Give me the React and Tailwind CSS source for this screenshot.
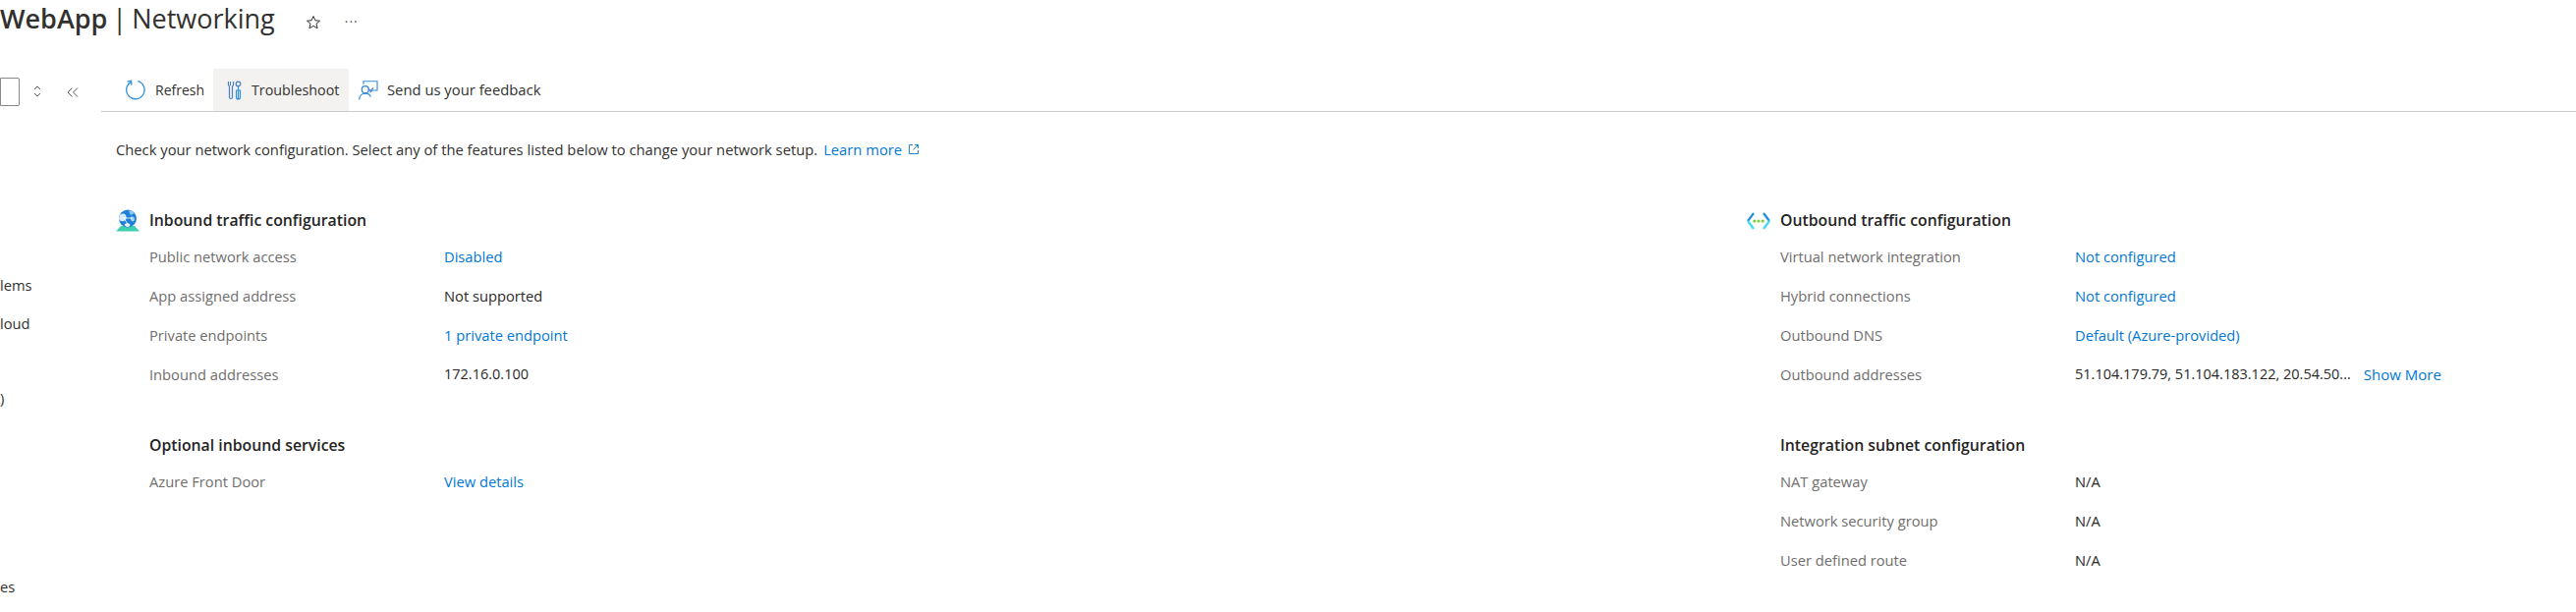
import React from "react";

const F = { fontFamily: '"Open Sans", "Noto Sans", sans-serif' };

function RefreshIcon() {
  return (
    <svg width="21" height="21" viewBox="0 0 21 21" fill="none" className="shrink-0">
      <path d="M6.2 2.6A9.2 9.2 0 1 0 13.4 1.7" stroke="#2f8fe0" strokeWidth="1.3" />
      <path d="M2.5 2.2 L6.6 1.2 L6.9 5.6" stroke="#2f8fe0" strokeWidth="1.3" />
    </svg>
  );
}

function ToolIcon() {
  return (
    <svg width="15" height="20" viewBox="0 0 15 20" fill="none" className="shrink-0">
      <path d="M1.5 1v3.5l1 1.5v11a1.5 1.5 0 0 0 3 0V6l1-1.5V1" stroke="#4a7fc1" strokeWidth="1.2" />
      <path d="M3.5 1v4" stroke="#4a7fc1" strokeWidth="1" />
      <circle cx="11.5" cy="3.4" r="2.3" stroke="#4a7fc1" strokeWidth="1.2" />
      <path d="M11.5 5.5v13M9.5 10h4v7a2 2 0 0 1-4 0z" stroke="#2f8fe0" strokeWidth="1.2" />
    </svg>
  );
}

function FeedbackIcon() {
  return (
    <svg width="20" height="20" viewBox="0 0 20 20" fill="none" className="shrink-0">
      <path d="M5 4V0.8H19V10H14L11.5 12.3" stroke="#2f8fe0" strokeWidth="1.1" />
      <path d="M10 8.5l2 2 3-3" stroke="#4a7fc1" strokeWidth="1.1" />
      <circle cx="6.8" cy="9.2" r="3.5" stroke="#2f7fd0" strokeWidth="1.2" />
      <path d="M0.7 19.5c0-4 2.6-6.4 6-6.4s5 1.2 5.6 3.5" stroke="#2f8fe0" strokeWidth="1.2" />
    </svg>
  );
}

function GlobeIcon() {
  return (
    <svg width="24" height="23" viewBox="0 0 24 23" fill="none" className="shrink-0">
      <path d="M5 17h14l5 5.5H0z" fill="#3fd0b0" />
      <circle cx="12" cy="9.5" r="9" fill="#1f7fd8" />
      <path d="M4 6c2-2 5-2 6 0s1 5-2 6-5-1-5-3z" fill="#d6ecfb" />
      <path d="M13 2c2-1 5 0 6 2l-4 2z" fill="#8cc8f2" />
      <path d="M15 8c2-1 4 0 4 2s-2 3-3 2-2-3-1-4z" fill="#a9d8f7" />
      <path d="M9 15c1-1 4-1 5 0s0 3-2 3-4-2-3-3z" fill="#e4f3fc" />
      <path d="M8 9l4 6M8 9l8 0" stroke="#ffffff" strokeWidth="0.8" />
    </svg>
  );
}

function OutboundIcon() {
  return (
    <svg width="24" height="20" viewBox="0 0 24 20" fill="none" className="shrink-0">
      <path d="M7 2 L1 10" stroke="#1c8fe0" strokeWidth="2.2" />
      <path d="M1 10 L7 18" stroke="#3fd8f0" strokeWidth="2.2" />
      <path d="M17 2 L23 10" stroke="#1c8fe0" strokeWidth="2.2" />
      <path d="M23 10 L17 18" stroke="#3fd8f0" strokeWidth="2.2" />
      <circle cx="7.8" cy="10" r="1.6" fill="#7ccf3a" />
      <circle cx="12" cy="10" r="1.6" fill="#7ccf3a" />
      <circle cx="16.2" cy="10" r="1.6" fill="#7ccf3a" />
    </svg>
  );
}

function StarIcon() {
  return (
    <svg width="16" height="16" viewBox="0 0 16 16" fill="none">
      <path d="M8 1.5l1.9 4.3 4.6.4-3.5 3 1.1 4.6L8 11.4l-4.1 2.4L5 9.2l-3.5-3 4.6-.4z" stroke="#323130" strokeWidth="1" />
    </svg>
  );
}

function ExternalIcon() {
  return (
    <svg width="12" height="12" viewBox="0 0 12 12" fill="none" className="shrink-0">
      <path d="M5 1.5H1.5v9h9V7M7 1.5h3.5V5M10.5 1.5L5.5 6.5" stroke="#0078d4" strokeWidth="0.9" />
    </svg>
  );
}

function Row({ label, value, link, more, digits }) {
  return (
    <div className="flex h-10 items-center text-[14.7px]">
      <div className="w-[300px] shrink-0 text-[#6f6e6d]">{label}</div>
      <div className={`${link ? "text-[#0078d4]" : "text-[#292827]"} ${digits ? "text-[14.5px]" : ""}`}>{value}</div>
      {more && <div className="ml-[13px] text-[15px] text-[#0078d4]">{more}</div>}
    </div>
  );
}

function Heading({ icon, children }) {
  return (
    <div className="flex h-[34px] items-center pt-[1px]">
      <div className="flex w-[34px] shrink-0 items-center">{icon}</div>
      <div className="text-[15.8px] font-[550] text-[#252423]">{children}</div>
    </div>
  );
}

function Section({ className, icon, title, rows }) {
  return (
    <div className={className}>
      <Heading icon={icon}>{title}</Heading>
      <div className="pl-[34px]">
        {rows.map((r) => (
          <Row key={r.label} {...r} />
        ))}
      </div>
    </div>
  );
}

export default function App() {
  const side = ["lems", "loud", "", ")", "", "", "", "", "es"];
  return (
    <div className="flex h-[623px] w-[2622px] flex-col overflow-hidden bg-white text-[#323130]" style={F}>
      <header className="flex h-[70px] shrink-0 items-start pt-[1px]">
        <h1 className="text-[27px] leading-[36px] text-[#323130] [word-spacing:-2px]">
          <span className="font-[550]">WebApp</span> | Networking
        </h1>
        <div className="ml-[31px] mt-[14px]"><StarIcon /></div>
        <div className="ml-[24px] mt-[11px] text-[14px] leading-[20px] tracking-[1px] text-[#605e5c]">···</div>
      </header>
      <div className="flex min-h-0 flex-1">
        <aside className="w-[103px] shrink-0 text-[14.7px] text-[#323130]">
          <div className="flex h-[201px] items-start pt-[9px]">
            <div className="h-[29px] w-[20px] rounded-r-[2px] border border-[#8a8886]" />
            <svg width="12" height="14" viewBox="0 0 12 14" fill="none" className="ml-[12px] mt-[7px]">
              <path d="M3 5l3-3 3 3M3 9l3 3 3-3" stroke="#605e5c" strokeWidth="1" />
            </svg>
            <svg width="14" height="12" viewBox="0 0 14 12" fill="none" className="ml-[23px] mt-[9px]">
              <path d="M6.5 1.5L2 6l4.5 4.5M12 1.5L7.5 6l4.5 4.5" stroke="#605e5c" strokeWidth="1" />
            </svg>
          </div>
          {side.map((s, i) => (
            <div key={i} className="flex h-[38.4px] items-center">{s}</div>
          ))}
        </aside>
        <main className="min-w-0 flex-1">
          <div className="flex h-[44px] items-stretch border-b border-[#cccccc] pl-[14px] text-[14px]">
            <div className="flex w-[100px] items-center gap-[10px] pl-[10px]"><RefreshIcon />Refresh</div>
            <div className="flex w-[138px] items-center gap-[10px] bg-[#f3f2f1] pl-[14px] text-[14.3px]"><ToolIcon />Troubleshoot</div>
            <div className="flex items-center gap-[9px] pl-[10px] text-[14.8px]"><FeedbackIcon />Send us your feedback</div>
          </div>
          <div className="pl-[15px]">
            <p className="mb-[17px] flex h-[76px] items-center text-[14.75px] text-[#323130]">
              Check your network configuration. Select any of the features listed below to change your network setup.
              <span className="ml-[6px] text-[#0078d4]">Learn more</span>
              <span className="ml-[6px]"><ExternalIcon /></span>
            </p>
            <div className="flex">
              <div className="w-[1660px] shrink-0">
                <Section
                  icon={<GlobeIcon />}
                  title="Inbound traffic configuration"
                  rows={[
                    { label: "Public network access", value: "Disabled", link: true },
                    { label: "App assigned address", value: "Not supported" },
                    { label: "Private endpoints", value: "1 private endpoint", link: true },
                    { label: "Inbound addresses", value: "172.16.0.100", digits: true },
                  ]}
                />
                <Section
                  className="mt-[35px]"
                  title="Optional inbound services"
                  rows={[{ label: "Azure Front Door", value: "View details", link: true }]}
                />
              </div>
              <div>
                <Section
                  icon={<OutboundIcon />}
                  title="Outbound traffic configuration"
                  rows={[
                    { label: "Virtual network integration", value: "Not configured", link: true },
                    { label: "Hybrid connections", value: "Not configured", link: true },
                    { label: "Outbound DNS", value: "Default (Azure-provided)", link: true },
                    { label: "Outbound addresses", value: "51.104.179.79, 51.104.183.122, 20.54.50...", more: "Show More", digits: true },
                  ]}
                />
                <Section
                  className="mt-[35px]"
                  title="Integration subnet configuration"
                  rows={[
                    { label: "NAT gateway", value: "N/A" },
                    { label: "Network security group", value: "N/A" },
                    { label: "User defined route", value: "N/A" },
                  ]}
                />
              </div>
            </div>
          </div>
        </main>
      </div>
    </div>
  );
}
